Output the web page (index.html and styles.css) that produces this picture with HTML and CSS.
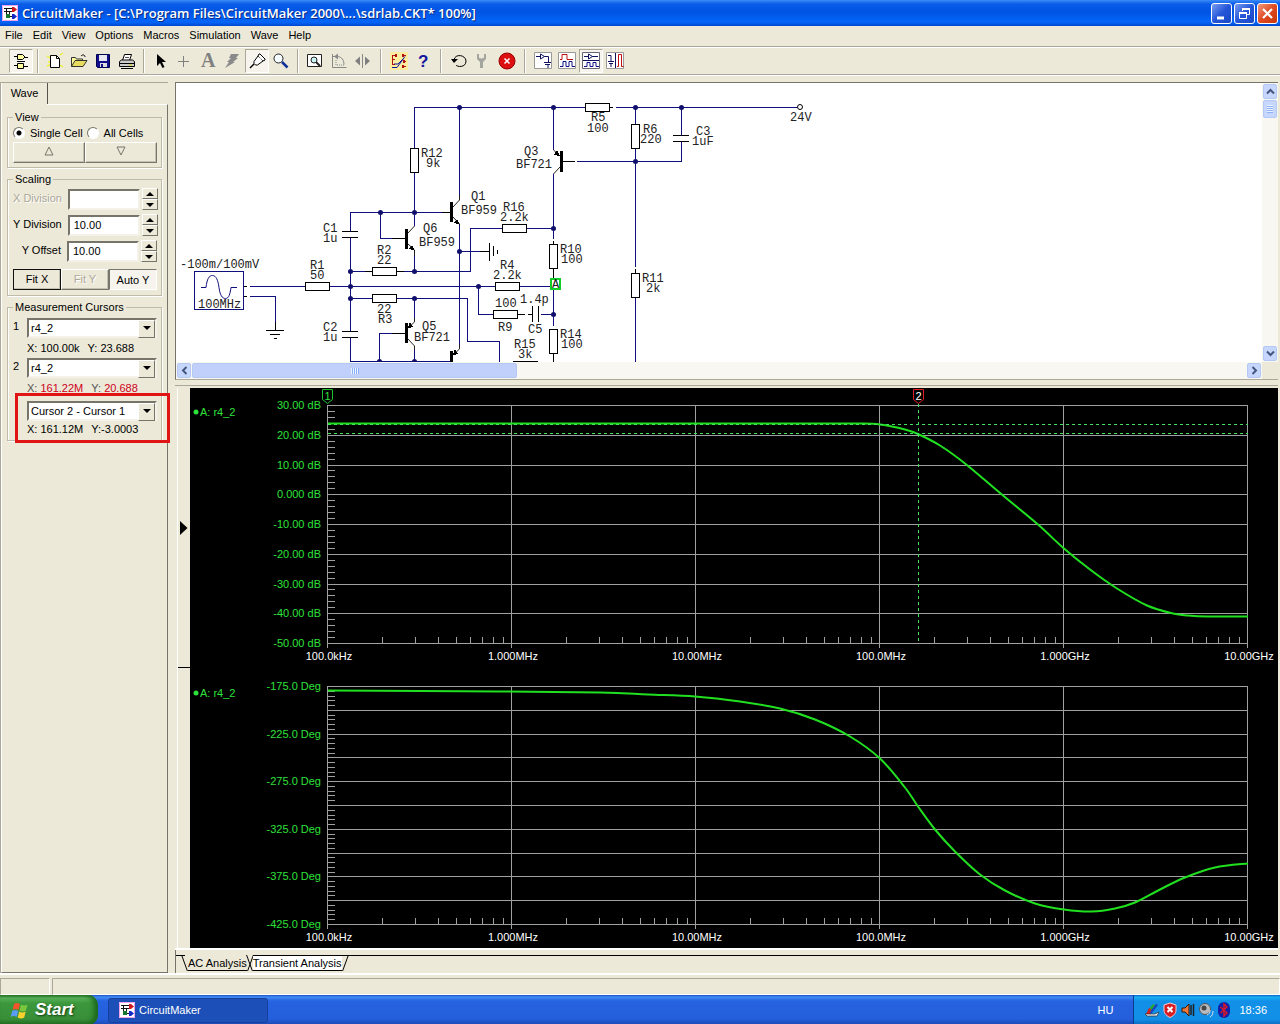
FILE: index.html
```
<!DOCTYPE html>
<html lang="en">
<head>
<meta charset="UTF-8" />
<meta name="viewport" content="width=device-width, initial-scale=1" />
<title>CircuitMaker</title>
<link rel="stylesheet" href="styles.css">
</head>
<body>

  <header class="titlebar">
    <svg class="app-icon" width="16" height="16" viewBox="0 0 16 16" aria-hidden="true">
      <rect width="16" height="16" fill="#fff"/>
      <path d="M0.5 0.5h15v15h-15z" fill="none" stroke="#f0a0e8"/>
      <path d="M2 3.500h8M2 6.500h8M4.500 3v9M4 11.500h6M7.500 7v3" stroke="#111" fill="none"/>
      <path d="M10 2h2l3 2.500-3 2.500h-2z" fill="#d01820"/>
      <path d="M10 9h2l3 2.500-3 2.500h-2z" fill="#1428c8"/>
      <path d="M4 9h4v4h-4z" fill="#187830"/>
    </svg>
    <h1>CircuitMaker - [C:\Program Files\CircuitMaker 2000\...\sdrlab.CKT* 100%]</h1>
    <div class="window-buttons">
      <button aria-label="Minimize"><svg width="19" height="19"><path d="M5 14h7" stroke="#fff" stroke-width="3"/></svg></button>
      <button aria-label="Restore"><svg width="19" height="19" fill="none" stroke="#fff"><path d="M7.500 7V4.500h7v6H12"/><path d="M7 5h8" stroke-width="2"/><path d="M4.500 8.500h7v6h-7z"/><path d="M4 9h8" stroke-width="2"/></svg></button>
      <button class="close" aria-label="Close"><svg width="19" height="19"><path d="M5 5l9 9M14 5l-9 9" stroke="#fff" stroke-width="2.200"/></svg></button>
    </div>
  </header>

  <nav class="menubar">
    <button>File</button>
    <button>Edit</button>
    <button>View</button>
    <button>Options</button>
    <button>Macros</button>
    <button>Simulation</button>
    <button>Wave</button>
    <button>Help</button>
  </nav>

  <div class="toolbar" role="toolbar" aria-label="Tools">
    <button class="pressed" aria-label="Parts panel"><svg viewBox="0 0 18 18"><g fill="#ffffa0" stroke="#000"><path d="M5.500 2.500h5l2.500 2.500-2.500 2.500h-5z"/><path d="M5.500 11.500h6v5h-6z"/></g><path d="M2 4.500h3M2 13.500h3M13 5.500h3M12 14.500h4M5 9.500h8" stroke="#000"/></svg></button>
    <span class="sep"></span>
    <button aria-label="New"><svg viewBox="0 0 18 18"><path d="M1 4l3 2M2 10h3M14 3l3-2M14 13l3 2M1 14l3-1" stroke="#ee3" stroke-width="1.500"/><path d="M4.500 3.500h6l3 3v9h-9z" fill="#fff" stroke="#000"/><path d="M10.500 3.500v3h3" fill="none" stroke="#000"/></svg></button>
    <button aria-label="Open"><svg viewBox="0 0 18 18"><path d="M1.500 14.500v-9h4l1 1.500h6v2" fill="#ffff9c" stroke="#333"/><path d="M1.500 14.500l3.500-6h12l-4 6z" fill="#e8dc60" stroke="#333"/><path d="M11 4c2-2 4-1 4 1" fill="none" stroke="#000"/></svg></button>
    <button aria-label="Save"><svg viewBox="0 0 18 18"><path d="M2.500 2.500h13v13h-12l-1-1z" fill="#10108c" stroke="#000050"/><path d="M5 3h8v6h-8z" fill="#e8e8f0"/><path d="M6 11h7v4h-7z" fill="#ddd"/><path d="M7 12h2v3h-2z" fill="#10108c"/></svg></button>
    <button aria-label="Print"><svg viewBox="0 0 18 18"><path d="M4.500 8.500l2-6h7l-2 6" fill="#fff" stroke="#000"/><path d="M7 5.500h4" stroke="#555"/><path d="M1.500 9.500l2-1.500h11l2 1.500v5h-15z" fill="#ccc" stroke="#000"/><path d="M1.500 11.500h15M3 16.500h12" stroke="#000"/><path d="M11 13h3" stroke="#dd0"/></svg></button>
    <span class="sep"></span>
    <button aria-label="Select"><svg viewBox="0 0 18 18"><path d="M5 2v12l3-3 2.500 5 2-1-2.500-5h4z" fill="#000"/></svg></button>
    <button aria-label="Wire"><svg viewBox="0 0 18 18"><path d="M2 9.500h11M7.500 4v11" stroke="#808080"/></svg></button>
    <button aria-label="Text"><svg class="roomy" viewBox="0 0 18 18"><text x="1" y="15" class="icon-letter gray">A</text></svg></button>
    <button aria-label="Delete"><svg viewBox="0 0 18 18"><path d="M7 2h8l-3 4h2l-5 4h2l-10 6 4-6h-2l4-4h-2z" fill="#8a8a8a"/></svg></button>
    <button class="pressed" aria-label="Probe"><svg viewBox="0 0 18 18"><path d="M2 16l4-4" stroke="#000" stroke-width="1.500"/><path d="M6 9.500l4-5.500 1-2h1l5 5v1l-2 1-5.500 4h-2l-1.500-1.500z" fill="#fff" stroke="#000"/><path d="M10 4l5 5" stroke="#000" stroke-dasharray="1 1"/></svg></button>
    <button aria-label="Zoom"><svg viewBox="0 0 18 18"><circle cx="6.500" cy="6.500" r="4.500" fill="#f4fcff" stroke="#222"/><path d="M10 10l5.500 5.500" stroke="#10309c" stroke-width="2.500"/></svg></button>
    <span class="sep"></span>
    <button aria-label="Fit to page"><svg viewBox="0 0 18 18"><path d="M1.500 2.500h14v12h-14z" fill="#fff" stroke="#222"/><circle cx="8" cy="8" r="3" fill="#c8f4f4" stroke="#222"/><path d="M10 10l4 4" stroke="#222" stroke-width="2"/></svg></button>
    <button aria-label="Rotate"><svg viewBox="0 0 18 18"><path d="M2.500 2v13.500h14M3 4.500h4c5 0 7 4 7 8" stroke="#888" fill="none"/><path d="M4 4.500l4-3v6z" fill="#888"/><path d="M6 8v5h8" stroke="#888" stroke-dasharray="1 1" fill="none"/></svg></button>
    <button aria-label="Mirror"><svg viewBox="0 0 18 18"><path d="M8.500 2v14" stroke="#888"/><path d="M1 9l5-4.500v9zM16 9l-5-4.500v9z" fill="#808080"/></svg></button>
    <span class="sep wide"></span>
    <button aria-label="Check wires"><svg viewBox="0 0 18 18"><rect width="18" height="18" fill="#fbeca0"/><path d="M2 3.500h4M2 7.500h3M2 12.500h3M12 3.500h4M13 9.500h3M13 14.500h3M2.500 3v10" stroke="#b01010" fill="none"/><path d="M2 15.500h5l8-11M4 12h4l6-6" stroke="#10189c" fill="none"/><path d="M5 2h2v3h-2zM12 2h2v3h-2zM13 8h2v3h-2zM12 13h2v3h-2z" fill="#b01010"/></svg></button>
    <button aria-label="Help"><svg viewBox="0 0 18 18"><text x="4" y="15" class="icon-letter blue">?</text></svg></button>
    <span class="sep wide"></span>
    <button aria-label="Reset"><svg viewBox="0 0 18 18"><path d="M4 8c1-7 12-5 12 1 0 7-9 6-10 4" stroke="#000" fill="none"/><path d="M1 7h7l-4 4z" fill="#000"/></svg></button>
    <button aria-label="Step"><svg viewBox="0 0 18 18"><path d="M3 2v5l3 3v6h3v-6l3-3v-5h-2v4h-1.500l-1 1-1-1h-1.500v-4z" fill="#a5a5a0"/></svg></button>
    <button aria-label="Stop"><svg viewBox="0 0 18 18"><circle cx="9" cy="9" r="8" fill="#dc1010" stroke="#900"/><path d="M6.500 6.500l5 5M11.500 6.500l-5 5" stroke="#fff" stroke-width="1.500"/></svg></button>
    <span class="sep wide"></span>
    <button aria-label="Schematic view"><svg viewBox="0 0 18 18"><path d="M0.500 0.500h17v16h-17z" fill="#fff" stroke="#999"/><path d="M2 4.500h4M10 4.500h4.500v6M10 10.500h7M11 12.500h5M14 13v3" stroke="#101060" fill="none"/><path d="M6.500 2v5l4-2.500z" fill="#fff" stroke="#101060"/></svg></button>
    <button aria-label="Wave view"><svg viewBox="0 0 18 18"><path d="M0.500 0.500h17v16h-17z" fill="#fff" stroke="#999"/><path d="M2 7.500h2v-5h5v5h6" stroke="#c01010" fill="none"/><path d="M2 14.500h3v-5h3v5h3v-5h3v5h3" stroke="#101080" fill="none"/></svg></button>
    <button class="pressed" aria-label="Split horizontally"><svg viewBox="0 0 18 18"><path d="M0.500 0.500h17v16h-17z" fill="#fff" stroke="#667"/><path d="M1 8.500h16M2 4.500h4M10 4.500h6" stroke="#101060"/><path d="M6.500 2v5l4-2.500z" fill="#fff" stroke="#101060"/><path d="M2 14.500h3v-4h3v4h3v-4h3v4h3" stroke="#101080" fill="none"/></svg></button>
    <button aria-label="Split vertically"><svg viewBox="0 0 18 18"><path d="M0.500 0.500h17v16h-17z" fill="#fff" stroke="#999"/><path d="M9.500 1v15M2 3.500h3v6M2 9.500h6M3 11.500h4M5 12v3" stroke="#101060" fill="none"/><path d="M11 14.500h1.500v-12h3v12h2" stroke="#c01010" fill="none"/></svg></button>
  </div>

  <main class="workspace">

    <aside class="sidebar">
      <div class="side-tabs"><button class="side-tab">Wave</button></div>
      <form class="side-page">
        <fieldset>
          <legend>View</legend>
          <div class="radios">
            <label><input type="radio" name="cells" checked> Single Cell</label>
            <label><input type="radio" name="cells"> All Cells</label>
          </div>
          <div class="button-row arrows">
            <button type="button" aria-label="Previous cell"><svg width="12" height="12"><path d="M6 2l4 8h-8z" fill="none" stroke="#77756a"/></svg></button>
            <button type="button" aria-label="Next cell"><svg width="12" height="12"><path d="M6 10l4-8h-8z" fill="none" stroke="#77756a"/></svg></button>
          </div>
        </fieldset>

        <fieldset>
          <legend>Scaling</legend>
          <div class="field disabled">
            <label for="xdiv">X Division</label>
            <input type="text" id="xdiv">
            <span class="spin"><button type="button" aria-label="Increase X division"></button><button type="button" aria-label="Decrease X division"></button></span>
          </div>
          <div class="field">
            <label for="ydiv">Y Division</label>
            <input type="text" id="ydiv" value="10.00">
            <span class="spin"><button type="button" aria-label="Increase Y division"></button><button type="button" aria-label="Decrease Y division"></button></span>
          </div>
          <div class="field">
            <label for="yoff">Y Offset</label>
            <input type="text" id="yoff" value="10.00">
            <span class="spin"><button type="button" aria-label="Increase Y offset"></button><button type="button" aria-label="Decrease Y offset"></button></span>
          </div>
          <div class="button-row fit">
            <button type="button" class="default">Fit X</button>
            <button type="button" disabled>Fit Y</button>
            <button type="button" class="on">Auto Y</button>
          </div>
        </fieldset>

        <fieldset class="cursors">
          <legend>Measurement Cursors</legend>
          <div class="cursor">
            <label for="cur1">1</label>
            <span class="combo"><select id="cur1"><option>r4_2</option></select></span>
            <p><span>X: 100.00k</span><span>Y: 23.688</span></p>
          </div>
          <div class="cursor red">
            <label for="cur2">2</label>
            <span class="combo"><select id="cur2"><option>r4_2</option></select></span>
            <p><span><i>X:</i> 161.22M</span><span><i>Y:</i> 20.688</span></p>
          </div>
          <div class="cursor marked">
            <span class="combo"><select aria-label="Cursor difference"><option>Cursor 2 - Cursor 1</option></select></span>
            <p><span>X: 161.12M</span><span>Y:-3.0003</span></p>
          </div>
        </fieldset>
      </form>
    </aside>

    <section class="document">
      <div class="schematic">
        <svg class="circuit" aria-label="Schematic">
          <g transform="translate(-176 -83)">
            <!-- wires -->
            <path class="wire" d="M414.500 148V107.500H585M616 107.500H797M414.500 172V226M459.500 107V195M350.500 231V212.500H442M380.500 212V238.500H392
              M350.500 238V331M350.500 338V361.500H450M350 271.500H365M404 271.500H470.500V228.500H502M526 228.500H553M414.500 256V271
              M250 286.500H305M329 286.500H495M519 286.500H550M350 298.500H372M396 298.500H467.500V341.500H499.500V362M414.500 298V318M414.500 350V362
              M379.500 362V333.500H392M459.500 225V345M459 251.500H480M478.500 286V314.500H493M541 314.500H553M553.500 107V150M553.500 174V239M553.500 289V326
              M577 161.500H681.500V142M681.500 107V135M635.500 107V124M635.500 149V267M635.500 298V362M250 296.500H275.500V322"/>
            <!-- component leads -->
            <path class="part" d="M609 107.500H613M442 212.500H450M392 238.500H405M392 333.500H405M365 271.500H372M396 271.500H404M244 286.500H247M244 296.500H247
              M563 161.500H575M517 314.500H525M528 314.500H532M553.500 241V244M553.500 269V278M553.500 354V362M635.500 269V273M480 251.500H489M275.500 322V330
              M342 231.500H358M342 237.500H358M342 331.500H358M342 337.500H358M673 135.500H689M673 141.500H689M532.500 306V322M538.500 306V322
              M489.500 243V261M493.500 246V256M497.500 250V254M266 330.500H284M270 334.500H280M274 338.500H277M513 361.500H538"/>
            <path class="lead" d="M459.500 195V200L453 207M453 217L459.500 224M414.500 226L408 233M408 244L414.500 250V256M414.500 318V322L408 328M408 339L414.500 346V350M459.500 345V349L453 355M553.500 150L560 156M560 167L553.500 174"/>
            <!-- transistor bars and arrows -->
            <path d="M450 202h3v20h-3zM405 229h3v20h-3zM405 323h3v20h-3zM450 351h3v11h-3zM560 151h3v21h-3z"/>
            <path d="M460 225l-6-2 3-4zM415 251l-6-2 3-4zM408 328l5-1-3-5zM453 355l5-1-3-5zM560 156l-6-1 3-5z"/>
            <!-- resistors -->
            <g class="body">
              <rect x="585.500" y="103.500" width="24" height="8"/>
              <rect x="372.500" y="267.500" width="24" height="8"/>
              <rect x="305.500" y="282.500" width="24" height="8"/>
              <rect x="372.500" y="294.500" width="24" height="8"/>
              <rect x="502.500" y="224.500" width="24" height="8"/>
              <rect x="495.500" y="282.500" width="24" height="8"/>
              <rect x="493.500" y="310.500" width="24" height="8"/>
              <rect x="410.500" y="148.500" width="8" height="24"/>
              <rect x="631.500" y="124.500" width="8" height="24"/>
              <rect x="631.500" y="273.500" width="8" height="24"/>
              <rect x="549.500" y="244.500" width="8" height="24"/>
              <rect x="549.500" y="329.500" width="8" height="24"/>
            </g>
            <!-- signal source -->
            <rect class="source" x="194.500" y="271.500" width="49" height="38"/>
            <path class="source round" d="M201 287.500H206C207 279 209 275.500 212.500 275.500S218 280 219 287.500S222 298.500 225.500 298.500S230 294 231 287.500H237"/>
            <circle class="pin" cx="800" cy="107" r="2.500"/>
            <g class="nodes">
              <circle cx="459.500" cy="107.500" r="2.500"/><circle cx="553.500" cy="107.500" r="2.500"/><circle cx="635.500" cy="107.500" r="2.500"/><circle cx="681.500" cy="107.500" r="2.500"/>
              <circle cx="635.500" cy="161.500" r="2.500"/><circle cx="380.500" cy="212.500" r="2.500"/><circle cx="414.500" cy="212.500" r="2.500"/><circle cx="553.500" cy="228.500" r="2.500"/>
              <circle cx="459.500" cy="251.500" r="2.500"/><circle cx="350.500" cy="271.500" r="2.500"/><circle cx="414.500" cy="271.500" r="2.500"/><circle cx="350.500" cy="286.500" r="2.500"/>
              <circle cx="478.500" cy="286.500" r="2.500"/><circle cx="350.500" cy="298.500" r="2.500"/><circle cx="414.500" cy="298.500" r="2.500"/><circle cx="553.500" cy="314.500" r="2.500"/>
              <circle cx="379.500" cy="361.500" r="2.500"/><circle cx="414.500" cy="361.500" r="2.500"/>
            </g>
            <rect class="probe" x="551" y="279" width="9" height="10"/>
            <g class="labels">
              <text x="180" y="268">-100m/100mV</text><text x="198" y="308">100MHz</text>
              <text x="310" y="269">R1</text><text x="310" y="279">50</text>
              <text x="323" y="232">C1</text><text x="323" y="242">1u</text>
              <text x="377" y="254">R2</text><text x="377" y="264">22</text>
              <text x="377" y="313">22</text><text x="378" y="323">R3</text>
              <text x="323" y="331">C2</text><text x="323" y="341">1u</text>
              <text x="421" y="157">R12</text><text x="426" y="167">9k</text>
              <text x="471" y="200">Q1</text><text x="461" y="214">BF959</text>
              <text x="503" y="211">R16</text><text x="500" y="221">2.2k</text>
              <text x="423" y="232">Q6</text><text x="419" y="246">BF959</text>
              <text x="524" y="155">Q3</text><text x="516" y="168">BF721</text>
              <text x="591" y="121">R5</text><text x="587" y="132">100</text>
              <text x="560" y="253">R10</text><text x="561" y="263">100</text>
              <text x="500" y="269">R4</text><text x="493" y="279">2.2k</text>
              <text x="495" y="307">100</text><text x="520" y="303">1.4p</text>
              <text x="498" y="331">R9</text><text x="528" y="333">C5</text>
              <text x="422" y="330">Q5</text><text x="414" y="341">BF721</text>
              <text x="514" y="348">R15</text><text x="518" y="358">3k</text>
              <text x="560" y="338">R14</text><text x="561" y="348">100</text>
              <text x="643" y="133">R6</text><text x="640" y="143">220</text>
              <text x="696" y="135">C3</text><text x="692" y="145">1uF</text>
              <text x="790" y="121">24V</text>
              <text x="642" y="282">R11</text><text x="646" y="292">2k</text>
              <text x="552" y="288">A</text>
            </g>
          </g>
        </svg>
        <div class="vscroll">
          <button aria-label="Scroll up"><svg width="9" height="9"><path d="M1 6.500l3.500-3.500 3.500 3.500"/></svg></button>
          <span class="thumb"></span>
          <button class="end" aria-label="Scroll down"><svg width="9" height="9"><path d="M1 2.500l3.500 3.500 3.500-3.500"/></svg></button>
        </div>
        <div class="hscroll">
          <button aria-label="Scroll left"><svg width="9" height="9"><path d="M6.500 1l-3.500 3.500 3.500 3.500"/></svg></button>
          <span class="thumb"></span>
          <button class="end" aria-label="Scroll right"><svg width="9" height="9"><path d="M2.500 1l3.500 3.500-3.500 3.500"/></svg></button>
        </div>
      </div>

      <div class="analysis">
        <div class="markers"><svg class="marker" width="10" height="16"><path d="M1 1v14l7.500-7z"/></svg></div>
        <svg class="plots" id="plots" aria-label="AC analysis"></svg>
      </div>

      <div class="sheet-tabs">
        <button class="active">AC Analysis</button>
        <button>Transient Analysis</button>
      </div>
    </section>
  </main>

  <div class="statusbar"><span></span><span></span></div>

  <footer class="taskbar">
    <button class="start">
      <svg width="20" height="20" viewBox="0 0 20 20" aria-hidden="true">
        <path d="M4 4c2-1.500 4-1.500 6 0l-1.500 6c-2-1.300-4-1.300-6 0z" fill="#f0562a"/>
        <path d="M11 4.500c2 1.300 4 1.300 6.500 0l-1.500 6c-2 1.300-4 1.300-6.500 0z" fill="#7cc83c"/>
        <path d="M2.200 11c2-1.300 4-1.300 6 0l-1.500 6c-2-1.300-4-1.300-6 0z" fill="#5a9cf4"/>
        <path d="M9.200 11.500c2 1.300 4 1.300 6.500 0l-1.500 6c-2 1.300-4 1.300-6.500 0z" fill="#fcd02c"/>
      </svg>
      Start
    </button>
    <button class="task">
      <svg width="16" height="16" viewBox="0 0 16 16" aria-hidden="true">
        <rect width="16" height="16" fill="#fff"/>
        <path d="M0.500 0.500h15v15h-15z" fill="none" stroke="#f0a0e8"/>
        <path d="M2 3.500h8M2 6.500h8M4.500 3v9M4 11.500h6M7.500 7v3" stroke="#111" fill="none"/>
        <path d="M10 2h2l3 2.500-3 2.500h-2z" fill="#d01820"/>
        <path d="M10 9h2l3 2.500-3 2.500h-2z" fill="#1428c8"/>
        <path d="M4 9h4v4h-4z" fill="#187830"/>
      </svg>
      CircuitMaker
    </button>
    <span class="lang">HU</span>
    <div class="tray">
      <svg width="16" height="16" viewBox="0 0 16 16"><path d="M3 11L12 2l2 1-7 9z" fill="#1840c0"/><path d="M4 8l5-6 2 1-5 7z" fill="#28a838"/><path d="M2 12l3-6 2 1-1 5z" fill="#d82020"/><path d="M1 12h10l4-2-2 4H3z" fill="#fff" stroke="#333" stroke-width=".8"/></svg>
      <svg width="16" height="16" viewBox="0 0 16 16"><path d="M8 1l6 2v5c0 4-3 6-6 7.500-3-1.500-6-3.500-6-7.500V3z" fill="#d81c24" stroke="#f4c8c8"/><path d="M5.500 5l5 5M10.500 5l-5 5" stroke="#fff" stroke-width="2"/></svg>
      <svg width="16" height="16" viewBox="0 0 16 16"><path d="M2 6h3l4-4v12l-4-4H2z" fill="#f07838" stroke="#301808"/><path d="M11 3v10M13.500 2v12" stroke="#222" stroke-width="1.500"/></svg>
      <svg width="16" height="16" viewBox="0 0 16 16"><circle cx="7" cy="7" r="5.500" fill="#b8bcc0" stroke="#555"/><circle cx="6" cy="6" r="2.500" fill="#444"/><path d="M12 8c0 3-1 4-3 5M15 9c0 3-1 5-3 6" stroke="#dde" fill="none"/></svg>
      <svg width="16" height="16" viewBox="0 0 16 16"><rect x="2" width="12" height="16" rx="6" fill="#1020a8"/><path d="M4.500 5l6.500 6-3 3V2l3 3-6.500 6" fill="none" stroke="#d81828" stroke-width="1.500"/></svg>
      <time>18:36</time>
    </div>
  </footer>

<script src="plots.js"></script>
</body>
</html>
```
FILE: styles.css
```
* {
  box-sizing: border-box;
}

body {
  margin: 0;
  min-height: 100vh;
  display: flex;
  flex-direction: column;
  background: #ece9d8;
  color: #000;
  font-family: "Liberation Sans", Arial, sans-serif;
  font-size: 11px;
  line-height: 13px;
}

button, input, select {
  font: inherit;
  color: inherit;
  margin: 0;
}

button {
  padding: 0;
  border: 0;
  background: none;
}

/* Title bar */

.titlebar {
  display: flex;
  align-items: center;
  height: 26px;
  padding: 0 2px;
  gap: 4px;
  background: linear-gradient(#3c8cf8 0, #0a5ce8 4px, #0054e3 12px, #0466fa 22px, #0048d0 26px);
}

.titlebar h1 {
  flex: 1;
  margin: 0;
  color: #fff;
  font: 600 13px/20px "Open Sans", "Noto Sans", sans-serif;
  text-shadow: 1px 1px #0a2a80;
  white-space: nowrap;
  overflow: hidden;
}

.window-buttons {
  display: flex;
  gap: 2px;
}

.window-buttons button {
  width: 21px;
  height: 21px;
  border: 1px solid #fff;
  border-radius: 3px;
  background: linear-gradient(135deg, #7a9cf0, #2456d8 50%, #1a48c4);
}

.window-buttons svg {
  display: block;
}

.window-buttons .close {
  background: linear-gradient(135deg, #f09a80, #e04a20 50%, #c8380c);
}

/* Menu and toolbar */

.menubar {
  display: flex;
  height: 21px;
  border-bottom: 1px solid #aca899;
}

.menubar button {
  padding: 0 5px 2px;
}

.toolbar {
  display: flex;
  align-items: center;
  height: 28px;
  padding: 0 9px;
  border-top: 1px solid #fff;
  border-bottom: 1px solid #aca899;
}

.toolbar button {
  width: 24px;
  height: 24px;
  flex: none;
  border: 1px solid transparent;
}

.toolbar button.pressed {
  background: #f6f4ec;
  border-color: #aca899 #fff #fff #aca899;
}

.toolbar svg {
  display: block;
  width: 18px;
  height: 18px;
  margin: 2px;
}

.toolbar svg.roomy {
  overflow: visible;
}

.sep {
  width: 2px;
  height: 24px;
  flex: none;
  margin: 0 4px;
  border-left: 1px solid #aca899;
  border-right: 1px solid #fff;
}

.sep.wide {
  margin: 0 5px;
}

.icon-letter {
  font: bold 20px "Liberation Serif", serif;
}

.icon-letter.gray {
  fill: #808080;
}

.icon-letter.blue {
  fill: #1414a0;
  font: bold 17px "Liberation Sans", sans-serif;
}

/* Workspace */

.workspace {
  flex: 1;
  display: flex;
  gap: 7px;
  padding-top: 6px;
  border-top: 1px solid #fff;
  border-bottom: 2px solid #fff;
}

.sidebar {
  width: 168px;
  flex: none;
  display: flex;
  flex-direction: column;
  border-top: 1px solid #aca899;
  border-left: 1px solid #aca899;
}

.side-tabs {
  display: flex;
}

.side-tab {
  width: 47px;
  height: 21px;
  border-left: 1px solid #fff;
  border-right: 1px solid #55534a;
}

.side-page {
  flex: 1;
  padding: 6px 5px;
  border-top: 1px solid #fff;
  border-left: 1px solid #fff;
  border-right: 1px solid #77756a;
  border-bottom: 1px solid #77756a;
}

/* the top edge does not run under the open tab */
.side-page::before {
  content: "";
  display: block;
  width: 45px;
  height: 1px;
  margin: -7px 0 6px -5px;
  background: #ece9d8;
}

fieldset {
  min-width: 0;
  margin: 0 0 5px;
  padding: 0 4px 4px 5px;
  border: 1px solid #bfbba9;
  box-shadow: inset 1px 0 #fff, 1px 1px #fff;
}

legend {
  padding: 0 2px;
}

.radios {
  display: flex;
  gap: 4px;
  height: 18px;
  align-items: center;
  white-space: nowrap;
}

.radios label {
  display: flex;
  align-items: center;
  gap: 5px;
}

.radios input {
  appearance: none;
  width: 12px;
  height: 12px;
  border: 1px solid;
  border-color: #77756a #fff #fff #77756a;
  border-radius: 50%;
  background: #fff;
}

.radios input:checked {
  background: radial-gradient(circle, #000 2px, #fff 3px);
}

.button-row {
  display: flex;
}

.button-row button {
  flex: 1;
  height: 21px;
  border: 1px solid;
  border-color: #fff #77756a #77756a #fff;
  box-shadow: inset -1px -1px #c5c1b0;
}

.button-row.fit {
  margin: 5px 0 1px;
}

.button-row .default {
  border-color: #111;
}

.button-row button:disabled {
  color: #aca899;
  text-shadow: 1px 1px #fff;
}

.button-row .on {
  padding-top: 2px;
  background: #f6f4ec;
  border-color: #77756a #fff #fff #77756a;
  box-shadow: none;
}

.field {
  display: flex;
  align-items: center;
  height: 26px;
  gap: 2px;
}

.field label {
  flex: 1;
  padding: 0 4px 2px 0;
  text-align: right;
  white-space: nowrap;
}

.field.disabled label {
  color: #aca899;
  text-shadow: 1px 1px #fff;
}

.field input {
  width: 72px;
  flex: none;
  height: 21px;
  padding: 0 4px;
  border: 2px solid;
  border-color: #77756a #f4f2e8 #f4f2e8 #77756a;
  background: #fff;
}

.spin {
  display: flex;
  flex-direction: column;
  flex: none;
  width: 16px;
}

.spin button {
  height: 11px;
  border: 1px solid;
  border-color: #fff #77756a #77756a #fff;
  display: flex;
  align-items: center;
  justify-content: center;
}

.spin button::after {
  content: "";
  border: 4px solid transparent;
  border-top-width: 0;
  border-bottom-color: #000;
}

.spin button:last-child::after {
  border-top: 4px solid #000;
  border-bottom: 0;
}

.cursors {
  padding-top: 4px;
  padding-bottom: 2px;
}

.cursor {
  display: grid;
  grid-template-columns: 14px 1fr;
  height: 40px;
}

.cursor .combo, .cursor p {
  grid-column: 2;
}

.cursor label {
  padding-top: 2px;
}

.cursor p {
  margin: 0;
  display: flex;
  gap: 8px;
  white-space: nowrap;
}

.cursor i {
  font-style: normal;
  color: #555;
}

.cursor.red p {
  color: #d00020;
}

.combo {
  position: relative;
  height: 20px;
}

.combo select {
  appearance: none;
  width: 100%;
  height: 20px;
  padding: 0 2px;
  border: 2px solid;
  border-color: #77756a #f4f2e8 #f4f2e8 #77756a;
  border-radius: 0;
  background: #fff;
}

.combo::before {
  content: "";
  position: absolute;
  top: 2px;
  right: 2px;
  width: 15px;
  height: 16px;
  background: #ece9d8;
  border: 1px solid;
  border-color: #fff #77756a #77756a #fff;
  pointer-events: none;
}

.combo::after {
  content: "";
  position: absolute;
  top: 8px;
  right: 6px;
  border: 4px solid transparent;
  border-top-color: #000;
  border-bottom: 0;
  pointer-events: none;
}

.cursor.marked {
  position: relative;
  padding-top: 3px;
}

/* red frame laid over the difference readout */
.cursor.marked::after {
  content: "";
  position: absolute;
  inset: -5px -13px -5px 2px;
  border: 3px solid #e01414;
  pointer-events: none;
}

/* Schematic */

.document {
  flex: 1;
  min-width: 0;
  display: flex;
  flex-direction: column;
  padding-right: 2px;
}

.schematic {
  display: grid;
  grid-template-columns: 1fr 16px;
  grid-template-rows: 279px 17px;
  border-top: 1px solid #77756a;
  border-left: 1px solid #77756a;
  border-bottom: 1px solid #aca899;
}

.circuit {
  width: 100%;
  height: 100%;
  background: #fff;
}

.circuit path, .circuit rect {
  shape-rendering: crispEdges;
}

.wire {
  fill: none;
  stroke: #10107c;
}

.part {
  fill: none;
  stroke: #000;
}

.circuit .lead {
  fill: none;
  stroke: #222;
  shape-rendering: auto;
}

.body rect {
  fill: #fff;
  stroke: #000;
}

.source {
  fill: none;
  stroke: #10107c;
}

.circuit .round {
  shape-rendering: auto;
}

.pin {
  fill: #fff;
  stroke: #000;
}

.nodes circle {
  fill: #10106c;
}

.probe {
  fill: #fff;
  stroke: #10d028;
  stroke-width: 2;
}

.labels text {
  font: 12px "Liberation Mono", "Courier New", monospace;
  fill: #222;
}

.vscroll, .hscroll {
  display: flex;
  gap: 1px;
  padding: 1px;
  background: #f8f7f2;
}

.vscroll {
  flex-direction: column;
}

.vscroll button, .hscroll button, .thumb {
  width: 14px;
  height: 15px;
  border: 1px solid #b4c8f4;
  border-radius: 2px;
  background: #c6d6fc;
}

.vscroll svg, .hscroll svg {
  display: block;
  margin: 2px auto;
  fill: none;
  stroke: #43577e;
  stroke-width: 2;
}

.vscroll .thumb {
  height: 18px;
  background: #c6d6fc repeating-linear-gradient(#eef4ff 0 1px, #8cb0f8 1px 2px) no-repeat center / 6px 8px;
}

.hscroll .thumb {
  width: 30%;
  background: #c0d0fa repeating-linear-gradient(90deg, #eef4ff 0 1px, #8cb0f8 1px 2px) no-repeat center / 8px 6px;
}

.vscroll .end {
  margin-top: auto;
}

.hscroll .end {
  margin-left: auto;
}

/* Analysis */

.analysis {
  flex: 1;
  display: flex;
  align-items: flex-start;
  min-height: 562px;
  margin-top: 5px;
  border-top: 1px solid #aca899;
  border-bottom: 2px solid #fff;
  padding: 2px 0 0 2px;
}

.markers {
  width: 13px;
  flex: none;
  align-self: stretch;
  border-left: 1px solid #fff;
}

.markers::after {
  content: "";
  display: block;
  height: 131px;
  border-bottom: 1px solid #000;
}

.marker {
  display: block;
  margin: 132px 0 0 1px;
}

.plots {
  flex: 1;
  min-width: 0;
  height: 560px;
  background: #000;
  font-size: 11px;
}

.grid {
  fill: none;
  stroke: #a0a0a0;
  shape-rendering: crispEdges;
}

.trace {
  fill: none;
  stroke: #20e020;
  stroke-width: 2;
}

.cursor-line {
  stroke: #40e060;
  stroke-dasharray: 3 3;
  shape-rendering: crispEdges;
}

.unit {
  fill: #2ee03a;
  text-anchor: end;
}

.series {
  fill: #2ee03a;
}

.freq {
  fill: #fff;
  text-anchor: middle;
}

.flag {
  fill: #000;
  stroke: #20c030;
}

.flag.second {
  stroke: #e02020;
}

.flag-text {
  fill: #2ee03a;
  text-anchor: middle;
}

.flag-text.second {
  fill: #fff;
}

/* Sheet tabs */

.sheet-tabs {
  display: flex;
  height: 23px;
  padding-top: 5px;
  border-left: 1px solid #77756a;
}

.sheet-tabs::before {
  content: "";
  width: 9px;
  border-top: 1px solid #000;
}

.sheet-tabs::after {
  content: "";
  flex: 1;
  margin-left: -3px;
  border-top: 1px solid #000;
}

.sheet-tabs button {
  position: relative;
  height: 16px;
  margin: 0 3px;
  background: #fff;
  border-top: 1px solid #000;
  border-bottom: 1px solid #000;
}

.sheet-tabs button.active {
  background: #ece9d8;
  border-top-color: #ece9d8;
}

.sheet-tabs button::before, .sheet-tabs button::after {
  content: "";
  position: absolute;
  top: -1px;
  bottom: -1px;
  width: 4px;
}

.sheet-tabs button::before {
  left: -4px;
  border-left: 1px solid #000;
  transform: skewX(20deg);
}

.sheet-tabs button::after {
  right: -4px;
  border-right: 1px solid #000;
  transform: skewX(-20deg);
}

/* Status bar and taskbar */

.statusbar {
  display: flex;
  gap: 2px;
  height: 20px;
  padding-top: 3px;
}

.statusbar span {
  width: 50px;
  border: 1px solid;
  border-color: #aca899 #fff #fff #aca899;
}

.statusbar span:last-child {
  flex: 1;
}

.taskbar {
  display: flex;
  align-items: center;
  height: 30px;
  color: #fff;
  background: linear-gradient(#1f4fc0 0, #3f8cf4 2px, #2663e0 6px, #245edb 24px, #1c48b0);
}

.start {
  display: flex;
  align-items: center;
  gap: 5px;
  width: 98px;
  height: 30px;
  padding-left: 10px;
  border-radius: 0 10px 10px 0;
  background: linear-gradient(#2c7c2c 0, #5cb45c 3px, #3c983c 8px, #388e38 24px, #246c24);
  box-shadow: inset -4px 0 5px #1c681c;
  font: italic bold 17px/24px "Liberation Sans", Arial, sans-serif;
  text-shadow: 1px 1px 2px #123c12;
}

.task {
  display: flex;
  align-items: center;
  gap: 4px;
  width: 160px;
  height: 25px;
  margin-left: 10px;
  padding-left: 10px;
  border-radius: 3px;
  border: 1px solid #163f9c;
  background: #1c50b8;
}

.lang {
  margin-left: auto;
}

.tray {
  display: flex;
  align-items: center;
  gap: 2px;
  height: 30px;
  margin-left: 20px;
  padding: 0 13px 0 10px;
  border-left: 1px solid #0c3c90;
  background: linear-gradient(#0c60c0 0, #18b0f4 2px, #1290e8 6px, #1290e8 24px, #0c68c0);
}

.tray time {
  margin-left: 5px;
}
```
FILE: plots.js
```
const NS = 'http://www.w3.org/2000/svg';
const svg = document.getElementById('plots');

// traces are stored on a 920 x 238 plot area
const BASE = 920;
const HEIGHT = 238;
const LEFT = 138;
const RIGHT = 30;

const FREQS = ['100.0kHz', '1.000MHz', '10.00MHz', '100.0MHz', '1.000GHz', '10.00GHz'];

const cells = [
  {
    top: 17, rows: 8,
    labels: ['30.00 dB', '20.00 dB', '10.00 dB', '0.000 dB', '-10.00 dB', '-20.00 dB', '-30.00 dB', '-40.00 dB', '-50.00 dB'],
    trace: [[0, 18], [300, 18], [500, 18], [530, 18], [552, 19], [577, 24], [591, 29], [612, 40], [637, 58], [675, 90], [710, 119],
      [736, 143], [762, 164], [789, 183], [819, 200], [845, 208], [860, 210], [880, 211], [920, 211]]
  },
  {
    top: 298, rows: 10,
    labels: ['-175.0 Deg', '-225.0 Deg', '-275.0 Deg', '-325.0 Deg', '-375.0 Deg', '-425.0 Deg'],
    trace: [[0, 4], [172, 5], [272, 6], [320, 8], [367, 10], [412, 15], [452, 22], [487, 33], [522, 50], [552, 72], [577, 101],
      [590, 120], [607, 143], [627, 165], [652, 188], [677, 204], [707, 217], [736, 223], [764, 225], [787, 222], [807, 216],
      [832, 203], [857, 191], [887, 181], [920, 177]]
  }
];

function add(name, attrs, text) {
  const el = document.createElementNS(NS, name);
  for (const key in attrs) el.setAttribute(key, attrs[key]);
  if (text) el.textContent = text;
  svg.appendChild(el);
}

const snap = (v) => Math.round(v) + 0.5;

// Catmull-Rom through all points
function smooth(pts) {
  let d = 'M' + pts[0].join(' ');
  for (let i = 0; i < pts.length - 1; i++) {
    const a = pts[i - 1] || pts[i], b = pts[i], c = pts[i + 1], e = pts[i + 2] || c;
    d += `C${b[0] + (c[0] - a[0]) / 6} ${b[1] + (c[1] - a[1]) / 6} ${c[0] - (e[0] - b[0]) / 6} ${c[1] - (e[1] - b[1]) / 6} ${c[0]} ${c[1]}`;
  }
  return d;
}

function drawCell(cell, width) {
  const bottom = cell.top + HEIGHT;
  const right = LEFT + width;
  let grid = '';

  for (let i = 0; i <= cell.rows; i++) {
    const y = cell.top + i * HEIGHT / cell.rows;
    grid += `M${LEFT} ${snap(y)}H${right}`;
    for (let k = 1; k < 5 && i < cell.rows; k++) {
      grid += `M${LEFT} ${snap(y + k * HEIGHT / cell.rows / 5)}h7`;
    }
  }
  for (let i = 0; i <= 5; i++) {
    const x = LEFT + i * width / 5;
    grid += `M${Math.round(x) - 0.5} ${cell.top}V${bottom + 5}`;
    for (let k = 2; k < 10 && i < 5; k++) {
      grid += `M${Math.round(x + Math.log10(k) * width / 5) - 0.5} ${bottom}v-6`;
    }
    add('text', { class: 'freq', x: Math.round(x) + 1, y: bottom + 17 }, FREQS[i]);
  }
  add('path', { class: 'grid', d: grid });

  cell.labels.forEach((label, i) => {
    const y = cell.top + i * HEIGHT / (cell.labels.length - 1);
    add('text', { class: 'unit', x: LEFT - 7, y: Math.round(y) + 4 }, label);
  });

  add('circle', { class: 'series', cx: 6, cy: cell.top + 7, r: 2.5 });
  add('text', { class: 'series', x: 10, y: cell.top + 11 }, 'A: r4_2');

  const pts = cell.trace.map(([x, y]) => [LEFT + x * width / BASE, cell.top + y + 0.5]);
  add('path', { class: 'trace', d: smooth(pts) });
}

function drawFlag(x, label, extra) {
  add('path', { class: 'flag' + extra, d: `M${x - 5} 1.5h10v10l-5 4l-5-4z` });
  add('text', { class: 'flag-text' + extra, x: x, y: 12 }, label);
}

function draw() {
  svg.replaceChildren();
  const width = svg.clientWidth - LEFT - RIGHT;
  cells.forEach((cell) => drawCell(cell, width));

  const right = LEFT + width;
  const cursor = snap(LEFT + 590 * width / BASE);
  add('path', { class: 'cursor-line', d: `M${LEFT} 36.5H${right}M${LEFT} 45.5H${right}M${cursor} 16V255` });
  drawFlag(LEFT - 0.5, '1', '');
  drawFlag(cursor, '2', ' second');
}

window.addEventListener('resize', draw);
draw();
```
